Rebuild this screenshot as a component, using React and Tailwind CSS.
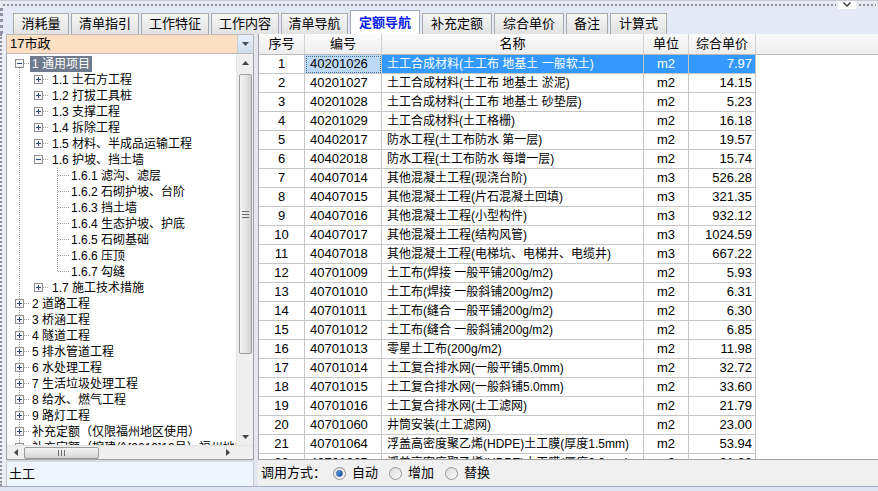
import React from 'react';

const tableRows = [
  ['1', '40201026', '土工合成材料(土工布 地基土 一般软土)', 'm2', '7.97'],
  ['2', '40201027', '土工合成材料(土工布 地基土 淤泥)', 'm2', '14.15'],
  ['3', '40201028', '土工合成材料(土工布 地基土 砂垫层)', 'm2', '5.23'],
  ['4', '40201029', '土工合成材料(土工格栅)', 'm2', '16.18'],
  ['5', '40402017', '防水工程(土工布防水 第一层)', 'm2', '19.57'],
  ['6', '40402018', '防水工程(土工布防水 每增一层)', 'm2', '15.74'],
  ['7', '40407014', '其他混凝土工程(现浇台阶)', 'm3', '526.28'],
  ['8', '40407015', '其他混凝土工程(片石混凝土回填)', 'm3', '321.35'],
  ['9', '40407016', '其他混凝土工程(小型构件)', 'm3', '932.12'],
  ['10', '40407017', '其他混凝土工程(结构风管)', 'm3', '1024.59'],
  ['11', '40407018', '其他混凝土工程(电梯坑、电梯井、电缆井)', 'm3', '667.22'],
  ['12', '40701009', '土工布(焊接 一般平铺200g/m2)', 'm2', '5.93'],
  ['13', '40701010', '土工布(焊接 一般斜铺200g/m2)', 'm2', '6.31'],
  ['14', '40701011', '土工布(缝合 一般平铺200g/m2)', 'm2', '6.30'],
  ['15', '40701012', '土工布(缝合 一般斜铺200g/m2)', 'm2', '6.85'],
  ['16', '40701013', '零星土工布(200g/m2)', 'm2', '11.98'],
  ['17', '40701014', '土工复合排水网(一般平铺5.0mm)', 'm2', '32.72'],
  ['18', '40701015', '土工复合排水网(一般斜铺5.0mm)', 'm2', '33.60'],
  ['19', '40701016', '土工复合排水网(土工滤网)', 'm2', '21.79'],
  ['20', '40701060', '井筒安装(土工滤网)', 'm2', '23.00'],
  ['21', '40701064', '浮盖高密度聚乙烯(HDPE)土工膜(厚度1.5mm)', 'm2', '53.94'],
  ['22', '40701065', '浮盖高密度聚乙烯(HDPE)土工膜(厚度2.0mm)', 'm2', '61.20'],
];

const treeRows = [
  { l: 0, b: '-', t: '1 通用项目', sel: true, first: true },
  { l: 1, b: '+', t: '1.1 土石方工程' },
  { l: 1, b: '+', t: '1.2 打拔工具桩' },
  { l: 1, b: '+', t: '1.3 支撑工程' },
  { l: 1, b: '+', t: '1.4 拆除工程' },
  { l: 1, b: '+', t: '1.5 材料、半成品运输工程' },
  { l: 1, b: '-', t: '1.6 护坡、挡土墙' },
  { l: 2, t: '1.6.1 滤沟、滤层' },
  { l: 2, t: '1.6.2 石砌护坡、台阶' },
  { l: 2, t: '1.6.3 挡土墙' },
  { l: 2, t: '1.6.4 生态护坡、护底' },
  { l: 2, t: '1.6.5 石砌基础' },
  { l: 2, t: '1.6.6 压顶' },
  { l: 2, t: '1.6.7 勾缝', last: true },
  { l: 1, b: '+', t: '1.7 施工技术措施' },
  { l: 0, b: '+', t: '2 道路工程' },
  { l: 0, b: '+', t: '3 桥涵工程' },
  { l: 0, b: '+', t: '4 隧道工程' },
  { l: 0, b: '+', t: '5 排水管道工程' },
  { l: 0, b: '+', t: '6 水处理工程' },
  { l: 0, b: '+', t: '7 生活垃圾处理工程' },
  { l: 0, b: '+', t: '8 给水、燃气工程' },
  { l: 0, b: '+', t: '9 路灯工程' },
  { l: 0, b: '+', t: '补充定额（仅限福州地区使用）' },
  { l: 0, b: '+', t: '补充定额（榕建价[2019]13号）福州地区' },
];

const tabs = ['消耗量', '清单指引', '工作特征', '工作内容', '清单导航', '定额导航', '补充定额', '综合单价', '备注', '计算式'];
const tabW = [56, 68, 68, 68, 67, 70, 70, 70, 42, 57];

function Box({ cx, minus }) {
  return (
    <g>
      <rect x={cx - 4} y={3.5} width={8} height={8} fill="#f6f6f6" stroke="#8f8f8f" />
      <line x1={cx - 2.5} y1={7.5} x2={cx + 2.5} y2={7.5} stroke="#27467f" />
      {!minus && <line x1={cx} y1={5} x2={cx} y2={10} stroke="#27467f" />}
    </g>
  );
}

function TreeLines({ r }) {
  const w = r.l === 0 ? 23 : r.l === 1 ? 43 : 62;
  const dot = { stroke: '#9c9c9c', strokeDasharray: '1 1' };
  return (
    <svg width={w} height={16} className="shrink-0">
      <line x1={12.5} y1={r.first ? 12 : 0} x2={12.5} y2={16} {...dot} />
      {r.l === 0 && <line x1={17} y1={7.5} x2={23} y2={7.5} {...dot} />}
      {r.l === 0 && <Box cx={12.5} minus={r.b === '-'} />}
      {r.l === 1 && <line x1={36} y1={7.5} x2={42} y2={7.5} {...dot} />}
      {r.l === 1 && <Box cx={31.5} minus={r.b === '-'} />}
      {r.l === 2 && <line x1={50.5} y1={0} x2={50.5} y2={r.last ? 8 : 16} {...dot} />}
      {r.l === 2 && <line x1={51} y1={7.5} x2={62} y2={7.5} {...dot} />}
    </svg>
  );
}

function Radio({ checked, label }) {
  return (
    <div className="flex items-center gap-[6px] w-[45px] shrink-0">
      <div className="w-[13px] h-[13px] shrink-0 rounded-full border border-[#8f9296] bg-gradient-to-br from-[#dcdcdc] to-[#fbfbfb] flex items-center justify-center">
        {checked && <div className="w-[7px] h-[7px] rounded-full bg-gradient-to-br from-[#5aa0e8] to-[#1b4f9a] border border-[#2a5ea8]" />}
      </div>
      <span className="text-[13px] leading-[16px]">{label}</span>
    </div>
  );
}

export default function App() {
  return (
    <div className="w-[878px] h-[491px] overflow-hidden flex flex-col bg-[#e3e9f6] text-black font-['Liberation_Sans','Noto_Sans_CJK_SC',sans-serif]">
      {/* top grip strip */}
      <div className="h-[8px] shrink-0 flex items-center bg-[#e7e9f1] border-t border-[#c9ccd6]">
        <div className="flex-1 h-[2px] mx-[2px] bg-[radial-gradient(circle,#8d91a0_0.8px,transparent_1px)] bg-[length:4px_2px]" />
        <div className="w-[18px] h-[8px] bg-white flex items-center justify-center">
          <svg width="8" height="5"><path d="M0.5 0.5 L4 4 L7.5 0.5" fill="none" stroke="#333" strokeWidth="1.4" /></svg>
        </div>
        <div className="w-[18px] h-[2px] mx-[2px] bg-[radial-gradient(circle,#8d91a0_0.8px,transparent_1px)] bg-[length:4px_2px]" />
      </div>

      {/* tabs */}
      <div className="h-[26px] shrink-0 flex items-end pl-[10px] gap-[2px] border-l-[3px] border-dotted border-[#8d91a0]">
        {tabs.map((t, i) =>
          t === '定额导航' ? (
            <div key={t} style={{ width: tabW[i] }} className="h-[24px] bg-white border border-b-0 border-[#a5a8b0] flex items-center justify-center text-[13px] font-bold text-[#0b1fe6] leading-[16px]">
              {t}
            </div>
          ) : (
            <div key={t} style={{ width: tabW[i] }} className="h-[21px] bg-gradient-to-b from-[#f6f6f6] to-[#e2e2e2] border border-b-0 border-[#a8a8a8] flex items-center justify-center text-[13px] leading-[16px]">
              {t}
            </div>
          )
        )}
      </div>

      {/* main */}
      <div className="flex-1 flex min-h-0">
        <div className="w-[6px] shrink-0 bg-[#eceef3] border-l-[2px] border-dotted border-[#8d91a0]" />

        {/* left panel */}
        <div className="w-[248px] shrink-0 flex flex-col">
          <div className="h-[20px] shrink-0 flex bg-[#fde0c4] border border-[#b9b9b9]">
            <div className="flex-1 pl-[3px] text-[13px] leading-[18px]">17市政</div>
            <div className="w-[16px] bg-gradient-to-b from-[#e8f0fa] to-[#cfdcec] border-l border-[#c5cfdc] flex items-center justify-center">
              <svg width="7" height="4"><path d="M0 0 L7 0 L3.5 4 Z" fill="#4a4f5a" /></svg>
            </div>
          </div>

          <div className="h-[405px] shrink-0 flex flex-col bg-white border-x border-[#a0a0a0]">
            <div className="flex-1 flex min-h-0">
              <div className="flex-1 overflow-hidden pt-[2px]">
                {treeRows.map((r, i) => (
                  <div key={i} className="h-[16px] flex items-center whitespace-nowrap">
                    <TreeLines r={r} />
                    <span className={`h-[16px] px-[2px] text-[12px] leading-[16px] ${r.sel ? 'bg-[#6e7b8c] text-white' : ''}`}>{r.t}</span>
                  </div>
                ))}
              </div>
              {/* vertical scrollbar */}
              <div className="w-[17px] shrink-0 bg-[#efefef] border-l border-[#e4e4e4] flex flex-col items-center">
                <div className="h-[17px] w-full flex items-center justify-center">
                  <svg width="7" height="4"><path d="M0 4 L7 4 L3.5 0 Z" fill="#444" /></svg>
                </div>
                <div className="mt-[3px] w-[13px] h-[280px] rounded-[2px] border border-[#9c9c9c] bg-gradient-to-r from-[#f4f4f4] via-[#e6e6e6] to-[#d2d2d2] flex flex-col items-center justify-center gap-[2px]">
                  <div className="w-[7px] h-px bg-[#6b6b6b]" />
                  <div className="w-[7px] h-px bg-[#6b6b6b]" />
                  <div className="w-[7px] h-px bg-[#6b6b6b]" />
                </div>
                <div className="flex-1" />
                <div className="h-[17px] w-full flex items-center justify-center">
                  <svg width="7" height="4"><path d="M0 0 L7 0 L3.5 4 Z" fill="#444" /></svg>
                </div>
              </div>
            </div>
            {/* horizontal scrollbar */}
            <div className="h-[14px] shrink-0 flex">
              <div className="flex-1 bg-[#efefef] border-t border-[#e4e4e4] flex items-center">
                <div className="w-[17px] flex items-center justify-center">
                  <svg width="4" height="7"><path d="M4 0 L4 7 L0 3.5 Z" fill="#444" /></svg>
                </div>
                <div className="w-[75px] h-[12px] rounded-[2px] border border-[#9c9c9c] bg-gradient-to-b from-[#f4f4f4] via-[#e6e6e6] to-[#d2d2d2] flex items-center justify-center gap-[2px]">
                  <div className="w-px h-[6px] bg-[#6b6b6b]" />
                  <div className="w-px h-[6px] bg-[#6b6b6b]" />
                  <div className="w-px h-[6px] bg-[#6b6b6b]" />
                </div>
                <div className="flex-1" />
                <div className="w-[17px] flex items-center justify-center">
                  <svg width="4" height="7"><path d="M0 0 L0 7 L4 3.5 Z" fill="#444" /></svg>
                </div>
              </div>
              <div className="w-[17px] bg-[#efefef] border-t border-[#e4e4e4]" />
            </div>
          </div>

          <div className="h-[3px] shrink-0 bg-[#d9dbe0] border-t border-[#a0a0a0]" />
          <div className="flex-1 bg-[#eef5fd] border-x border-[#c4c8d0] pl-[2px] text-[13px] leading-[24px]">土工</div>
        </div>

        <div className="w-[4px] shrink-0 bg-[#e4e7ee]" />

        {/* right panel */}
        <div className="flex-1 flex flex-col min-w-0">
          <div className="flex-1 bg-white border-l border-[#a0a0a0] overflow-hidden">
            <div className="h-[21px] flex bg-gradient-to-b from-[#fbfbfb] to-[#eeeeee] border-b border-[#b9b9b9] text-[13px] leading-[20px]">
              <div className="w-[46px] shrink-0 text-center border-r border-[#d2d2d2]">序号</div>
              <div className="w-[77px] shrink-0 text-center border-r border-[#d2d2d2]">编号</div>
              <div className="w-[262px] shrink-0 text-center border-r border-[#d2d2d2]">名称</div>
              <div className="w-[45px] shrink-0 text-center border-r border-[#d2d2d2]">单位</div>
              <div className="w-[67px] shrink-0 text-center border-r border-[#d2d2d2]">综合单价</div>
              <div className="flex-1" />
            </div>
            {tableRows.map((r, i) => {
              const sel = i === 0;
              return (
                <div key={i} className="h-[19px] flex text-[12px] leading-[18px] whitespace-nowrap">
                  <div className="w-[46px] shrink-0 text-center border-r border-b border-[#c6c6c6] text-[13px]">{r[0]}</div>
                  <div className={`w-[77px] shrink-0 pl-[5px] border-r border-b border-[#c6c6c6] text-[13px] ${sel ? 'bg-[#bcdaf8] outline outline-1 outline-dotted outline-[#4a6d9a] -outline-offset-2' : ''}`}>{r[1]}</div>
                  <div className={`w-[262px] shrink-0 pl-[5px] overflow-hidden border-r border-b border-[#c6c6c6] ${sel ? 'bg-[#3399ff] text-white' : ''}`}>{r[2]}</div>
                  <div className={`w-[45px] shrink-0 text-center border-r border-b border-[#c6c6c6] text-[13px] ${sel ? 'bg-[#3399ff] text-white' : ''}`}>{r[3]}</div>
                  <div className={`w-[67px] shrink-0 text-right pr-[3px] border-r border-b border-[#c6c6c6] text-[13px] ${sel ? 'bg-[#3399ff] text-white' : ''}`}>{r[4]}</div>
                </div>
              );
            })}
          </div>
          <div className="h-[27px] shrink-0 bg-[#f0f0f0] border-t border-[#a0a0a0] flex items-center pl-[3px] gap-[11px]">
            <span className="text-[13px] leading-[16px] w-[65px] shrink-0 -mr-[4px]">调用方式：</span>
            <Radio checked label="自动" />
            <Radio label="增加" />
            <Radio label="替换" />
          </div>
        </div>
      </div>

      <div className="h-[5px] shrink-0 bg-[#dfe5f3] border-t border-[#a5acbd]" />
    </div>
  );
}
